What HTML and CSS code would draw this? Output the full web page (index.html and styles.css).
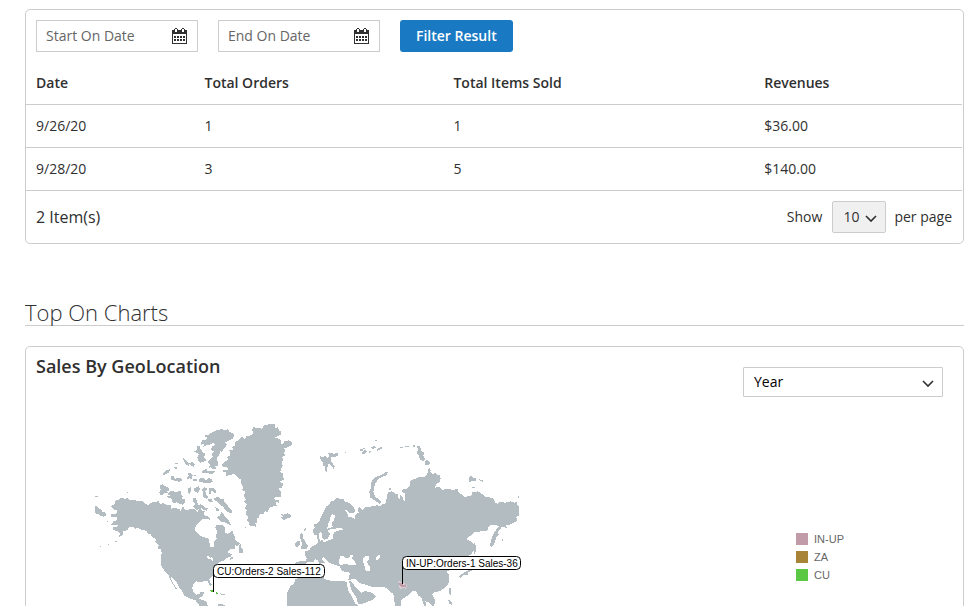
FILE: index.html
```
<!DOCTYPE html>
<html lang="en">
<head>
    <meta charset="UTF-8">
    <meta name="viewport" content="width=device-width, initial-scale=1.0">
    <title>Sales Dashboard</title>
    <link rel="stylesheet" href="styles.css">
</head>
<body>
    <section class="panel report">
        <form class="filters">
            <div class="date-field">
                <input type="text" id="startDate" name="start" placeholder="Start On Date" aria-label="Start On Date">
                <button type="button" class="calendar" aria-label="Pick start date">
                    <svg width="15" height="16" viewBox="0 0 15 16" shape-rendering="crispEdges">
                        <path fill="#303030" fill-rule="evenodd" d="M0 2h2V1h1V0h2v1h1v1h3V1h1V0h2v1h1v1h2v14H0zM3 1v3h2V1zM10 1v3h2V1zM1 6v9h13V6z"/>
                        <path fill="#303030" d="M2 8h2v2H2zM5 8h2v2H5zM8 8h2v2H8zM11 8h2v2h-2zM2 11h2v2H2zM5 11h2v2H5zM8 11h2v2H8zM11 11h2v2h-2z"/>
                    </svg>
                </button>
            </div>
            <div class="date-field">
                <input type="text" id="endDate" name="end" placeholder="End On Date" aria-label="End On Date">
                <button type="button" class="calendar" aria-label="Pick end date">
                    <svg width="15" height="16" viewBox="0 0 15 16" shape-rendering="crispEdges">
                        <path fill="#303030" fill-rule="evenodd" d="M0 2h2V1h1V0h2v1h1v1h3V1h1V0h2v1h1v1h2v14H0zM3 1v3h2V1zM10 1v3h2V1zM1 6v9h13V6z"/>
                        <path fill="#303030" d="M2 8h2v2H2zM5 8h2v2H5zM8 8h2v2H8zM11 8h2v2h-2zM2 11h2v2H2zM5 11h2v2H5zM8 11h2v2H8zM11 11h2v2h-2z"/>
                    </svg>
                </button>
            </div>
            <button type="button" class="filter-button">Filter Result</button>
        </form>

        <table class="report-table">
            <thead>
                <tr>
                    <th class="col-date">Date</th>
                    <th class="col-orders">Total Orders</th>
                    <th class="col-items">Total Items Sold</th>
                    <th>Revenues</th>
                </tr>
            </thead>
            <tbody>
                <tr>
                    <td>9/26/20</td>
                    <td>1</td>
                    <td>1</td>
                    <td>$36.00</td>
                </tr>
                <tr>
                    <td>9/28/20</td>
                    <td>3</td>
                    <td>5</td>
                    <td>$140.00</td>
                </tr>
            </tbody>
        </table>

        <div class="pager">
            <span class="item-count">2 Item(s)</span>
            <div class="page-size">
                <label for="pageSize">Show</label>
                <select id="pageSize" class="select small">
                    <option>10</option>
                    <option>20</option>
                    <option>50</option>
                </select>
                <span>per page</span>
            </div>
        </div>
    </section>

    <h2 class="section-title">Top On Charts</h2>

    <section class="panel geo">
        <div class="geo-header">
            <h3>Sales By GeoLocation</h3>
            <select id="period" class="select" aria-label="Period">
                <option>Year</option>
                <option>Month</option>
                <option>Week</option>
            </select>
        </div>
        <div class="geo-chart">
            <svg class="map" width="450" height="294" viewBox="0 0 450 294" role="img" aria-label="World map">
                <g transform="scale(.33333)" shape-rendering="crispEdges">
                    <!-- North America -->
                    <path class="land" d="M93 288L104 282 104 272 116 270 122 264 136 266 142 264 150 270 165 270 175 274 188 273 196 282 206 285 214 278 222 276 236 274 240 282 250 280 260 284 272 286 274 296 286 294 300 298 302 306 306 292 312 290 314 300 330 298 344 298 352 306 358 294 352 286 364 282 366 292 362 300 374 304 372 316 384 318 392 330 376 326 366 328 360 336 350 344 346 352 346 362 354 372 362 378 374 382 386 386 388 398 392 412 402 410 402 396 410 388 408 374 412 366 406 354 408 344 418 344 428 346 434 352 434 366 442 372 452 366 458 362 460 372 466 380 466 390 474 396 480 402 474 408 466 406 464 416 452 418 444 424 446 430 456 432 452 440 440 444 430 452 418 456 412 464 402 470 398 480 404 490 396 500 388 506 390 516 396 524 392 530 386 520 384 512 372 514 360 516 348 514 340 522 337 534 340 546 350 554 358 552 362 546 372 546 370 556 362 562 358 566 368 570 380 576 384 588 408 600 412 640 370 620 356 584 346 570 330 566 312 556 306 542 296 530 288 514 278 506 272 500 276 514 284 526 292 538 286 536 278 522 270 508 266 496 258 488 248 474 242 464 244 450 242 434 246 430 242 416 234 416 236 406 226 396 228 388 216 380 210 370 206 374 198 362 184 360 176 354 166 356 158 350 148 352 142 360 130 364 130 372 116 384 120 372 112 364 100 360 98 352 110 352 118 344 102 346 94 344 100 334 112 330 110 322 94 320 92 312 108 312 112 302 100 298z"/>
                    <path class="water" d="M380 438L388 440 392 446 386 446 380 444zM394 442L400 448 398 452 394 450z"/>
                    <!-- Arctic islands -->
                    <path class="land" d="M363 98L368 90 378 90 384 84 374 80 374 74 386 74 390 70 398 66 410 60 420 60 424 56 434 60 444 58 448 66 460 70 462 80 456 88 448 90 440 96 434 94 440 104 436 112 430 118 426 126 420 122 418 134 410 144 414 156 416 166 406 168 408 178 398 176 392 172 386 178 390 164 384 156 390 148 398 140 394 132 402 124 392 120 396 110 404 104 398 98 390 104 380 106 370 110 374 102 362 104z"/>
                    <path class="land" d="M346 122L352 120 350 106 358 108 362 118 368 126 376 132 372 144 380 150 370 156 360 158 354 150 352 142 358 132 342 124zM308 145L314 146 320 154 328 162 326 168 316 162zM328 160L336 156 344 164 342 170 334 168zM250 190L260 180 270 178 266 188 256 192 250 196zM272 200L280 198 284 206 302 204 308 210 298 216 284 212 272 210zM284 160L294 160 294 163 284 163zM282 172L290 170 292 176 284 176zM322 192L330 188 338 196 336 208 328 204 324 210 320 202 328 198zM338 208L350 206 350 214 338 214zM342 196L350 194 348 200zM366 182L374 180 378 174 384 184 404 184 402 190 392 192 380 188 366 188zM356 206L370 204 378 210 386 204 396 208 398 216 386 220 372 218 356 216z"/>
                    <path class="land" d="M240 226L248 222 252 228 260 230 268 234 268 240 262 244 264 248 254 250 248 256 240 254 238 248 242 240zM262 252L272 244 280 242 284 248 294 244 304 244 302 254 308 258 306 266 316 266 316 276 308 284 296 280 290 276 282 280 274 274 276 266 264 264 260 260 270 256zM324 234L332 232 334 240 330 252 324 250zM342 236L356 228 360 238 354 248 344 246zM338 264L346 262 352 276 354 288 360 296 350 300 340 290 346 282 338 274zM366 240L374 232 382 236 376 244 380 256 386 262 380 266 370 262 370 248zM386 236L396 232 404 236 410 246 404 250 396 240 392 252 386 250zM402 266L414 260 422 268 430 266 434 276 442 284 448 294 458 302 454 310 444 306 436 300 430 290 420 284 412 274 404 272zM384 268L396 268 398 276 386 276zM406 292L414 294 418 304 410 304zM410 322L420 316 424 306 430 312 434 320 442 326 450 338 454 346 442 342 434 336 424 336 418 328zM360 286L368 284 372 292 384 294 380 302 370 300z"/>
                    <path class="land" d="M142 245h3v4h-3zM45 258h8v4h-8zM45 286L52 290 58 296 66 300 66 306 76 308 78 316 70 320 60 318 56 312 46 310 46 300zM80 332h4v3h-4zM60 407h3v4h-3zM84 402h4v4h-4zM106 392h5v4h-5zM476 422L476 406 482 402 482 414 490 418 490 428 478 430zM448 446L458 440 460 444 450 452zM420 550L432 552 438 555 424 555zM412 584L424 582 438 586 420 590z"/>
                    <!-- Greenland, Iceland -->
                    <path class="land" d="M425 165L434 156 446 148 440 142 452 136 450 126 446 122 460 118 454 112 464 108 464 96 476 90 486 80 496 88 498 78 516 76 520 68 516 60 520 52 534 54 546 56 552 46 564 46 566 42 584 42 586 54 594 52 596 60 604 66 602 74 592 78 584 84 596 86 604 92 602 104 610 102 612 92 624 94 624 90 638 98 634 106 624 112 612 116 616 122 612 130 616 136 606 142 610 150 604 156 608 166 604 176 600 186 610 192 608 200 612 208 600 214 610 222 606 234 594 236 604 244 602 260 584 262 582 268 600 272 596 278 588 276 590 288 574 290 566 298 564 308 556 302 550 312 536 314 538 324 530 326 532 336 526 340 528 350 510 348 506 336 500 330 506 320 496 312 500 302 494 294 500 284 492 276 498 268 490 258 496 246 486 240 490 230 482 220 482 208 474 204 470 198 462 192 448 196 436 198 440 188 430 186 430 180 446 180 440 170 428 170z"/>
                    <path class="land" d="M594 302L598 304 598 308zM602 310L610 314 624 310 632 316 632 322 620 326 612 330 602 324 608 320zM494 350h5v4h-5z"/>
                    <!-- Cuba -->
                    <path class="cuba" d="M389 540H397L402 544 402 548 396 545 389 543zM407 546L414 550 414 553 407 551z"/>

                    <g transform="translate(600)">
                        <!-- Europe and Asia -->
                        <path class="land" d="M44 462L48 456 60 454 78 454 80 446 74 432 76 424 88 420 96 410 108 404 114 396 112 384 112 374 104 376 98 362 104 352 102 344 112 340 120 330 124 318 130 308 134 298 140 288 148 284 150 276 162 272 170 262 180 268 190 266 194 274 206 278 220 290 226 300 222 308 208 308 200 300 194 302 202 310 204 320 214 322 224 326 226 314 236 308 234 294 240 290 246 300 256 292 270 290 284 288 292 284 296 290 306 284 318 280 320 262 324 246 336 244 344 250 354 254 352 262 360 268 360 252 368 262 372 276 376 268 376 252 366 246 368 238 382 236 390 228 390 214 400 208 412 204 420 200 434 202 442 190 448 180 456 192 466 190 474 198 478 194 482 206 478 216 468 224 464 234 476 230 486 240 500 236 520 240 534 236 536 248 546 254 556 262 564 258 574 258 578 246 594 244 606 252 614 260 628 262 642 266 644 276 652 282 660 276 676 278 692 274 704 278 712 276 712 286 718 290 716 318 708 320 712 332 700 338 688 344 678 346 680 354 664 350 660 360 654 366 656 374 648 384 644 398 636 412 630 408 634 388 640 372 650 356 658 348 648 346 632 346 624 354 622 364 604 364 584 366 570 378 560 388 576 396 582 404 580 420 574 432 566 438 560 440 540 480 520 478 500 484 508 496 508 514 502 526 490 536 478 544 466 546 456 552 462 562 466 574 460 592 448 578 436 574 440 590 448 610 436 600 430 580 424 562 414 556 408 544 398 544 388 554 372 564 362 572 362 588 356 606 346 590 342 568 340 552 330 546 320 534 306 530 290 532 276 530 256 524 240 520 226 506 198 512 180 470 150 460z"/>
                        <path class="land" d="M20 588L22 548 30 530 42 520 46 508 58 500 100 500 128 498 134 508 146 510 156 514 198 514 206 524 214 546 226 564 230 580 240 600 230 640 30 640z"/>
                        <path class="water" d="M230 590L236 584 256 578 270 570 276 574 280 592 276 610 240 610z"/>
                        <path class="land" d="M206 512L216 516 224 528 236 540 244 548 256 542 268 544 282 552 288 560 280 568 262 576 240 584 232 578 224 560 214 538z"/>
                        <path class="water" d="M120 364L126 370 126 384 134 388 120 392 116 382zM142 356L144 342 150 330 152 318 158 312 166 318 162 330 156 338 158 350 148 354zM142 360L164 356 182 354 190 358 176 362 164 366 158 376 160 386 144 392 128 398 128 390 144 386 150 372zM176 454L182 438 194 440 194 446 208 442 212 434 222 434 216 444 226 456 228 464 214 466 196 462 180 466zM248 446L258 438 268 440 266 450 260 456 266 466 272 470 268 484 254 480 254 468 250 458zM286 444L298 434 300 442 290 452z"/>
                        <path class="water" d="M54 468L76 462 84 456 100 456 106 448 114 452 120 464 134 472 140 480 134 482 142 486 148 480 152 478 144 466 134 458 124 448 130 442 144 456 156 466 164 472 168 484 176 482 174 488 188 484 202 486 210 488 206 506 200 516 184 512 170 510 158 514 148 506 136 504 134 492 120 494 90 496 56 500 50 492 56 484 48 476zM200 520L206 520 214 540 228 560 234 580 228 584 218 564 206 544zM224 508L232 512 240 524 252 530 262 528 272 532 280 544 272 546 256 544 248 538 240 536 232 526z"/>
                        <!-- British Isles -->
                        <path class="land" d="M60 374L64 370 70 374 68 384 76 392 78 402 84 408 80 416 64 418 64 410 68 402 62 392zM46 398L58 390 60 404 50 412 44 406zM72 360L78 354 76 362 72 366z"/>
                        <!-- Svalbard, Franz Josef Land, Novaya Zemlya, Severnaya Zemlya -->
                        <path class="land" d="M120 138L130 142 136 136 142 144 148 138 144 130 156 128 162 132 174 128 176 136 164 142 152 142 154 156 164 168 162 178 154 166 146 162 142 172 142 188 136 184 136 170 128 166 128 156 122 150zM194 126h4v3h-4zM240 118h8v4h-8zM250 124L256 118 260 124 254 132 244 130zM248 114h8v3h-8zM266 120L272 124 268 130zM274 112L284 108 288 112 278 118zM290 118L298 114 302 110 308 114 302 118 292 122zM286 91h5v3h-5zM360 110h8v3h-8zM376 108h10v3h-10z"/>
                        <path class="land" d="M270 262L268 244 274 232 272 220 280 206 290 200 302 196 312 190 318 184 324 188 318 196 304 202 294 208 286 220 282 232 280 246 286 260 296 268 306 276 298 282 286 272 276 266zM398 106h8v5h-8zM410 108L420 108 424 122 432 128 430 138 436 146 430 154 420 148 416 136 410 130 414 118zM434 156L442 148 450 158 446 166 436 164zM442 180L448 174 454 182 448 188zM566 202L574 198 582 204 590 206 588 214 576 214 566 216zM598 208L610 212 610 216 600 212zM576 230h8v5h-8zM714 258h4v5h-4zM328 234h5v6h-5zM666 388h4v4h-4z"/>
                        <!-- Japan, Sakhalin, Philippines -->
                        <path class="land" d="M582 398L588 406 588 424 582 436 580 420zM576 470L582 470 576 482 566 486 562 496 550 494 542 504 538 500 546 492 558 484 570 480zM508 534L514 536 512 556 506 550zM504 568L514 574 518 586 508 582z"/>
                        <!-- Uttar Pradesh -->
                        <path class="region" d="M354 512L360 514 366 518 372 518 376 524 382 526 378 536 366 534 364 538 356 532 358 524z"/>
                        <path class="uttar" d="M358 518L364 518 370 524 378 526 376 532 364 530 358 526z"/>
                    </g>
                </g>
                <g class="callout">
                    <path d="M133.500 182V158.500a4 4 0 0 1 4-4H240.500a4 4 0 0 1 4 4V163.500a4 4 0 0 1-4 4H137.500a4 4 0 0 1-4-4"/>
                    <text x="137" y="165">CU:Orders-2 Sales-112</text>
                    <path d="M322.500 174V150.500a4 4 0 0 1 4-4H436.500a4 4 0 0 1 4 4V155.500a4 4 0 0 1-4 4H326.500a4 4 0 0 1-4-4"/>
                    <text x="326" y="157">IN-UP:Orders-1 Sales-36</text>
                </g>
            </svg>
            <ul class="legend">
                <li><span class="swatch in-up"></span>IN-UP</li>
                <li><span class="swatch za"></span>ZA</li>
                <li><span class="swatch cu"></span>CU</li>
            </ul>
        </div>
    </section>
</body>
</html>
```
FILE: styles.css
```
* {
    box-sizing: border-box;
}

body {
    font-family: "Open Sans", "Noto Sans", sans-serif;
    font-size: 14px;
    line-height: 20px;
    color: #303030;
    background-color: #fff;
    margin: 0;
    padding: 9px 10px 0 25px;
}

input, button, select {
    font: inherit;
    color: inherit;
}

.panel {
    border: 1px solid #ccc;
    border-radius: 5px;
}

.report {
    padding-right: 1px;
}

.filters {
    display: flex;
    gap: 20px;
    padding: 10px;
}

.date-field {
    display: flex;
    align-items: center;
    width: 162px;
    height: 32px;
    border: 1px solid #ccc;
    padding-right: 10px;
}

.date-field input {
    flex: 1;
    min-width: 0;
    border: none;
    outline: none;
    background: none;
    padding: 0 9px;
}

.date-field input::placeholder {
    color: #666;
    opacity: 1;
}

.calendar {
    display: flex;
    border: none;
    background: none;
    padding: 0;
    cursor: pointer;
}

.filter-button {
    height: 32px;
    padding: 0 16px;
    border: none;
    border-radius: 3px;
    background-color: #1979c3;
    color: #fff;
    font-weight: 600;
    cursor: pointer;
}

.filter-button:hover {
    background-color: #006bb4;
}

.report-table {
    width: 100%;
    border-collapse: separate;
    border-spacing: 0;
    table-layout: fixed;
}

.report-table th,
.report-table td {
    height: 43px;
    padding: 0 10px;
    border-bottom: 1px solid #ccc;
    text-align: left;
}

.report-table th {
    font-weight: 600;
}

.col-date {
    width: 18%;
}

.col-orders {
    width: 26.6%;
}

.col-items {
    width: 33.2%;
}

.pager {
    display: flex;
    justify-content: space-between;
    align-items: center;
    padding: 10px;
}

.item-count {
    font-size: 16px;
}

.page-size {
    display: flex;
    align-items: center;
    gap: 8px;
}

.page-size label {
    margin-right: 2px;
}

.select {
    appearance: none;
    width: 200px;
    height: 30px;
    padding: 0 10px;
    border: 1px solid #ccc;
    border-radius: 1px;
    color: #000;
    background: #fff url("data:image/svg+xml,%3Csvg xmlns='http://www.w3.org/2000/svg' width='12' height='8'%3E%3Cpath d='M1 1l5 5 5-5' fill='none' stroke='%23303030' stroke-width='1.6'/%3E%3C/svg%3E") no-repeat right 8px top 12px;
}

.select.small {
    width: 54px;
    height: 32px;
    border-radius: 2px;
    color: #303030;
    background-color: #f0f0f0;
    background-position: right 8px top 13px;
}

.section-title {
    margin: 56px 0 20px;
    padding-bottom: 1px;
    border-bottom: 1px solid #ccc;
    font-size: 22px;
    line-height: 24px;
    font-weight: 300;
}

.geo-header {
    display: flex;
    justify-content: space-between;
    align-items: flex-start;
    padding: 0 20px 0 10px;
}

.geo-header h3 {
    margin: 9px 0 0;
    font-size: 18px;
    font-weight: 600;
}

.geo-header .select {
    margin-top: 20px;
}

.geo-chart {
    display: flex;
    justify-content: space-between;
    align-items: center;
    padding: 13px 119px 20px 54px;
}

.land {
    fill: #b2bcc1;
}

.water {
    fill: #fff;
}

.region {
    fill: #d9cdd2;
}

.uttar {
    fill: #c29ba8;
}

.cuba {
    fill: #5bc844;
}

.callout path {
    fill: #fff;
    stroke: #000;
    stroke-width: 1px;
}

.callout text {
    font-family: "Liberation Sans", Arial, sans-serif;
    font-size: 10px;
    fill: #000;
}

.legend {
    display: flex;
    flex-direction: column;
    gap: 6px;
    margin: 0;
    padding: 0;
    list-style: none;
    font-family: "Liberation Sans", Arial, sans-serif;
    font-size: 11px;
    line-height: 12px;
    color: #666;
}

.legend li {
    display: flex;
    gap: 6px;
}

.swatch {
    width: 12px;
    height: 12px;
}

.in-up {
    background-color: #c29ba8;
}

.za {
    background-color: #a78438;
}

.cu {
    background-color: #5bc844;
}
```
